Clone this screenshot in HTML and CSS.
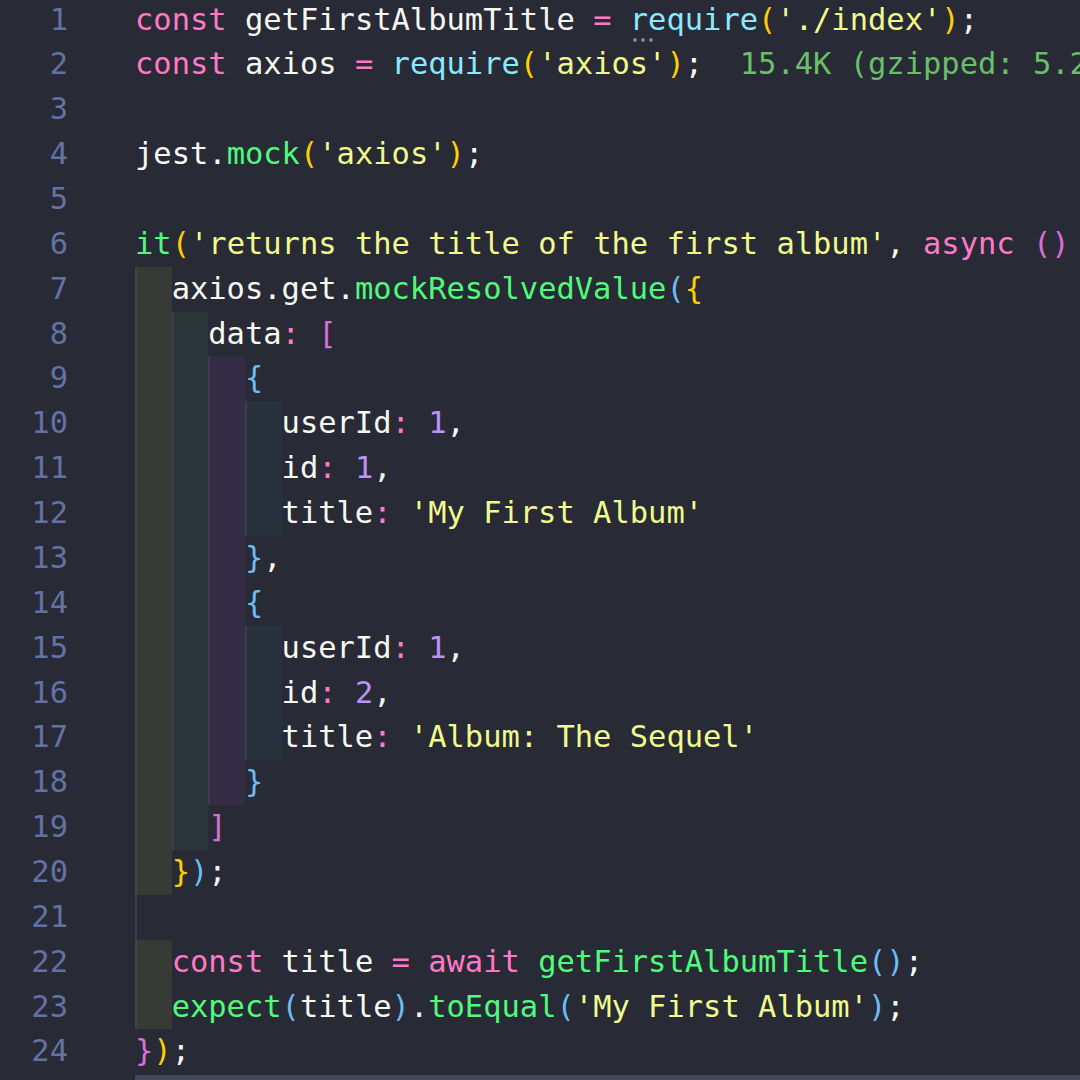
FILE: index.html
```html
<!DOCTYPE html>
<html>
<head>
<meta charset="utf-8">
<link rel="stylesheet" href="styles.css">
</head>
<body>
<div class="editor">
  <div class="line"><span class="num">1</span><span class="txt"><span class="kw">const</span> getFirstAlbumTitle <span class="kw">=</span> <span class="fn req">require</span><span class="b1">(</span><span class="str">'./index'</span><span class="b1">)</span>;</span></div>
  <div class="line"><span class="num">2</span><span class="txt"><span class="kw">const</span> axios <span class="kw">=</span> <span class="fn">require</span><span class="b1">(</span><span class="str">'axios'</span><span class="b1">)</span>;  <span class="cost">15.4K (gzipped: 5.2K)</span></span></div>
  <div class="line"><span class="num">3</span><span class="txt"></span></div>
  <div class="line"><span class="num">4</span><span class="txt">jest.<span class="call">mock</span><span class="b1">(</span><span class="str">'axios'</span><span class="b1">)</span>;</span></div>
  <div class="line"><span class="num">5</span><span class="txt"></span></div>
  <div class="line"><span class="num">6</span><span class="txt"><span class="call">it</span><span class="b1">(</span><span class="str">'returns the title of the first album'</span>, <span class="kw">async</span> <span class="b2">()</span> <span class="kw">=&gt;</span> <span class="b2">{</span></span></div>
  <div class="line"><span class="num">7</span><span class="ind l1"></span><span class="txt">axios.get.<span class="call">mockResolvedValue</span><span class="b3">(</span><span class="b1">{</span></span></div>
  <div class="line"><span class="num">8</span><span class="ind l1"></span><span class="ind l2"></span><span class="txt">data<span class="kw">:</span> <span class="b2">[</span></span></div>
  <div class="line"><span class="num">9</span><span class="ind l1"></span><span class="ind l2"></span><span class="ind l3"></span><span class="txt"><span class="b3">{</span></span></div>
  <div class="line"><span class="num">10</span><span class="ind l1"></span><span class="ind l2"></span><span class="ind l3"></span><span class="ind l4"></span><span class="txt">userId<span class="kw">:</span> <span class="nm">1</span>,</span></div>
  <div class="line"><span class="num">11</span><span class="ind l1"></span><span class="ind l2"></span><span class="ind l3"></span><span class="ind l4"></span><span class="txt">id<span class="kw">:</span> <span class="nm">1</span>,</span></div>
  <div class="line"><span class="num">12</span><span class="ind l1"></span><span class="ind l2"></span><span class="ind l3"></span><span class="ind l4"></span><span class="txt">title<span class="kw">:</span> <span class="str">'My First Album'</span></span></div>
  <div class="line"><span class="num">13</span><span class="ind l1"></span><span class="ind l2"></span><span class="ind l3"></span><span class="txt"><span class="b3">}</span>,</span></div>
  <div class="line"><span class="num">14</span><span class="ind l1"></span><span class="ind l2"></span><span class="ind l3"></span><span class="txt"><span class="b3">{</span></span></div>
  <div class="line"><span class="num">15</span><span class="ind l1"></span><span class="ind l2"></span><span class="ind l3"></span><span class="ind l4"></span><span class="txt">userId<span class="kw">:</span> <span class="nm">1</span>,</span></div>
  <div class="line"><span class="num">16</span><span class="ind l1"></span><span class="ind l2"></span><span class="ind l3"></span><span class="ind l4"></span><span class="txt">id<span class="kw">:</span> <span class="nm">2</span>,</span></div>
  <div class="line"><span class="num">17</span><span class="ind l1"></span><span class="ind l2"></span><span class="ind l3"></span><span class="ind l4"></span><span class="txt">title<span class="kw">:</span> <span class="str">'Album: The Sequel'</span></span></div>
  <div class="line"><span class="num">18</span><span class="ind l1"></span><span class="ind l2"></span><span class="ind l3"></span><span class="txt"><span class="b3">}</span></span></div>
  <div class="line"><span class="num">19</span><span class="ind l1"></span><span class="ind l2"></span><span class="txt"><span class="b2">]</span></span></div>
  <div class="line"><span class="num">20</span><span class="ind l1"></span><span class="txt"><span class="b1">}</span><span class="b3">)</span>;</span></div>
  <div class="line"><span class="num">21</span><span class="ind guide"></span><span class="txt"></span></div>
  <div class="line"><span class="num">22</span><span class="ind l1"></span><span class="txt"><span class="kw">const</span> title <span class="kw">=</span> <span class="kw">await</span> <span class="call">getFirstAlbumTitle</span><span class="b3">()</span>;</span></div>
  <div class="line"><span class="num">23</span><span class="ind l1"></span><span class="txt"><span class="call">expect</span><span class="b3">(</span>title<span class="b3">)</span>.<span class="call">toEqual</span><span class="b3">(</span><span class="str">'My First Album'</span><span class="b3">)</span>;</span></div>
  <div class="line"><span class="num">24</span><span class="txt"><span class="b2">}</span><span class="b1">)</span>;</span></div>
</div>
<div class="hscroll"></div>
</body>
</html>
```
FILE: styles.css
```css
html, body {
  margin: 0;
  padding: 0;
  background: #282a36;
  width: 1080px;
  height: 1080px;
  overflow: hidden;
}
body {
  position: relative;
  font-family: "DejaVu Sans Mono", "Liberation Mono", monospace;
  font-size: 30.45px;
  color: #f8f8f2;
}
.editor {
  margin-top: -2.4px;
  display: flex;
  flex-direction: column;
}
.line {
  display: flex;
  height: 44.87px;
  line-height: 44.87px;
  white-space: pre;
}
.num {
  flex: 0 0 68px;
  text-align: right;
  color: #6272a4;
  margin-right: 67px;
}
.ind {
  flex: 0 0 2ch;
  width: 2ch;
}
.l1 { background: #383a35; box-shadow: inset 2px 0 0 #45473f; }
.l2 { background: #2c3538; box-shadow: inset 2px 0 0 #3a4246; }
.l3 { background: #352c45; box-shadow: inset 2px 0 0 #433a52; }
.l4 { background: #28323f; box-shadow: inset 2px 0 0 #36404c; }
.guide { box-shadow: inset 2px 0 0 #3c3e47; }
.txt { flex: 0 0 auto; }
.kw { color: #ff79c6; }
.fn { color: #8be9fd; }
.call { color: #50fa7b; }
.str { color: #f1fa8c; }
.nm { color: #bd93f9; }
.b1 { color: #ffd000; }
.b2 { color: #da70d6; }
.b3 { color: #6cbdf2; }
.cost { color: #6abf69; }
.req { position: relative; }
.req::after {
  content: "";
  position: absolute;
  left: 1px;
  top: 36px;
  width: 22px;
  height: 4px;
  background: radial-gradient(circle, #8a8a8a 1.5px, transparent 2px) 0 0 / 8px 4px repeat-x;
}
.hscroll {
  position: absolute;
  left: 135px;
  right: 0;
  bottom: 0;
  height: 5px;
  background: #44475a;
}
```
